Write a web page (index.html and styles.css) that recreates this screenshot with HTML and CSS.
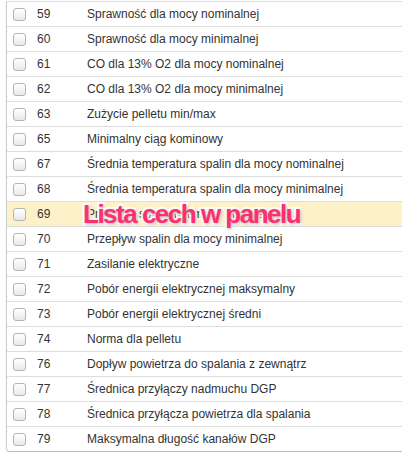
FILE: index.html
```html
<!DOCTYPE html>
<html>
<head>
<meta charset="utf-8">
<link rel="stylesheet" href="styles.css">
</head>
<body>
<div class="panel">
  <div class="row"><span class="cb"></span><span class="num">59</span><span class="name">Sprawność dla mocy nominalnej</span></div>
  <div class="row"><span class="cb"></span><span class="num">60</span><span class="name">Sprawność dla mocy minimalnej</span></div>
  <div class="row"><span class="cb"></span><span class="num">61</span><span class="name">CO dla 13% O2 dla mocy nominalnej</span></div>
  <div class="row"><span class="cb"></span><span class="num">62</span><span class="name">CO dla 13% O2 dla mocy minimalnej</span></div>
  <div class="row"><span class="cb"></span><span class="num">63</span><span class="name">Zużycie pelletu min/max</span></div>
  <div class="row"><span class="cb"></span><span class="num">65</span><span class="name">Minimalny ciąg kominowy</span></div>
  <div class="row"><span class="cb"></span><span class="num">67</span><span class="name">Średnia temperatura spalin dla mocy nominalnej</span></div>
  <div class="row"><span class="cb"></span><span class="num">68</span><span class="name">Średnia temperatura spalin dla mocy minimalnej</span></div>
  <div class="row hl"><span class="cb"></span><span class="num">69</span><span class="name">Przepływ spalin dla mocy nominalnej</span><span class="label">Lista cech w panelu</span></div>
  <div class="row"><span class="cb"></span><span class="num">70</span><span class="name">Przepływ spalin dla mocy minimalnej</span></div>
  <div class="row"><span class="cb"></span><span class="num">71</span><span class="name">Zasilanie elektryczne</span></div>
  <div class="row"><span class="cb"></span><span class="num">72</span><span class="name">Pobór energii elektrycznej maksymalny</span></div>
  <div class="row"><span class="cb"></span><span class="num">73</span><span class="name">Pobór energii elektrycznej średni</span></div>
  <div class="row"><span class="cb"></span><span class="num">74</span><span class="name">Norma dla pelletu</span></div>
  <div class="row"><span class="cb"></span><span class="num">76</span><span class="name">Dopływ powietrza do spalania z zewnątrz</span></div>
  <div class="row"><span class="cb"></span><span class="num">77</span><span class="name">Średnica przyłączy nadmuchu DGP</span></div>
  <div class="row"><span class="cb"></span><span class="num">78</span><span class="name">Średnica przyłącza powietrza dla spalania</span></div>
  <div class="row"><span class="cb"></span><span class="num">79</span><span class="name">Maksymalna długość kanałów DGP</span></div>
</div>
</body>
</html>
```

FILE: styles.css
```css
html, body {
  margin: 0;
  padding: 0;
  background: #fff;
}
body {
  font-family: "Liberation Sans", Arial, sans-serif;
  font-size: 12px;
  color: #333;
}
.panel {
  margin: 1px 0 0 6px;
  border-left: 1px solid #ccc;
  border-top: 1px solid #ddd;
  border-bottom: 1px solid #bbb;
  border-bottom-left-radius: 4px;
  box-shadow: 0 1px 2px rgba(0,0,0,0.08);
}
.row {
  position: relative;
  display: flex;
  align-items: center;
  height: 24px;
  border-bottom: 1px solid #ddd;
}
.row:last-child {
  border-bottom: none;
}
.row.hl {
  background: #fcf1c9;
}
.cb {
  box-sizing: border-box;
  width: 13px;
  height: 13px;
  margin-left: 6px;
  border: 1px solid #b4b4b4;
  border-radius: 3px;
  background: linear-gradient(#fff, #e9e9e9);
}
.num {
  margin-left: 11px;
  width: 50px;
}
.name {
  white-space: nowrap;
}
.label {
  position: absolute;
  left: 76px;
  top: -1px;
  font-family: "Liberation Sans", Arial, sans-serif;
  font-weight: bold;
  font-size: 26px;
  line-height: 26px;
  letter-spacing: -1.5px;
  color: #ff2f6e;
  -webkit-text-stroke: 4px #fff;
  paint-order: stroke fill;
  text-shadow: 1px 1px 3px rgba(0,0,0,0.3);
  white-space: nowrap;
}
```
